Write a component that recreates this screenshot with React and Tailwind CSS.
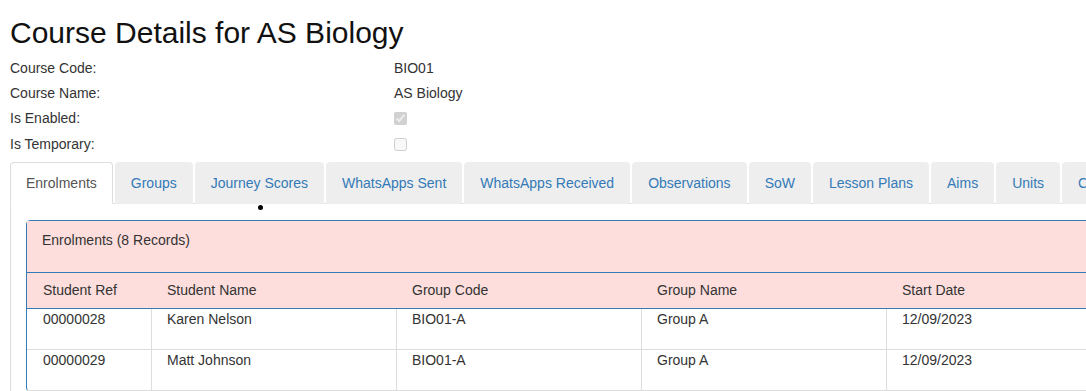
import React from "react";

const details = [
  { label: "Course Code:", value: "BIO01", h: "h-[25px]" },
  { label: "Course Name:", value: "AS Biology", h: "h-[25px]" },
  { label: "Is Enabled:", checkbox: true, checked: true, h: "h-[26px]" },
  { label: "Is Temporary:", checkbox: true, checked: false, h: "h-[25px]" },
];

const tabs = [
  "Enrolments",
  "Groups",
  "Journey Scores",
  "WhatsApps Sent",
  "WhatsApps Received",
  "Observations",
  "SoW",
  "Lesson Plans",
  "Aims",
  "Units",
  "Comments",
];

const columns = ["Student Ref", "Student Name", "Group Code", "Group Name", "Start Date"];

const enrolments = [
  ["00000028", "Karen Nelson", "BIO01-A", "Group A", "12/09/2023"],
  ["00000029", "Matt Johnson", "BIO01-A", "Group A", "12/09/2023"],
];

const colWidths = ["w-[124px]", "w-[245px]", "w-[245px]", "w-[245px]", "flex-1"];

function App() {
  return (
    <div className="h-screen w-full overflow-hidden bg-white font-['Liberation_Sans',Arial,sans-serif] text-[14px] leading-[20px] text-[#333]">
      <div className="w-[1200px] px-[10px]">
        <h1 className="mt-[16px] mb-[9px] h-[33px] text-[30px] leading-[33px] font-normal text-[#111]">
          Course Details for AS Biology
        </h1>

        {/* course details */}
        <div className="flex flex-col">
          {details.map((d) => (
            <div key={d.label} className={`flex ${d.h}`}>
              <div className="w-[384px] shrink-0">{d.label}</div>
              <div>
                {d.checkbox ? (
                  <input
                    type="checkbox"
                    disabled
                    readOnly
                    checked={d.checked}
                    className="m-0 mt-[4px] h-[13px] w-[13px]"
                  />
                ) : (
                  d.value
                )}
              </div>
            </div>
          ))}
        </div>

        {/* tabs */}
        <ul className="mt-[3px] flex border-b border-[#ddd]">
          {tabs.map((t, i) => (
            <li key={t} className="mr-[2px] mb-[-1px] shrink-0">
              <span
                className={
                  i === 0
                    ? "block rounded-t-[4px] border border-[#ddd] border-b-transparent bg-white px-[15px] py-[10px] text-[#555]"
                    : "block rounded-t-[4px] border border-transparent bg-[#eee] px-[15px] py-[10px] text-[#337ab7]"
                }
              >
                {t}
              </span>
            </li>
          ))}
        </ul>

        <div className="relative border-x border-[#ddd] px-[15px] pt-[16px]">
          <span className="absolute left-[247px] top-[1px] h-[5px] w-[5px] rounded-full bg-black"></span>

          <div className="rounded-[4px] border border-[#337ab7]">
            <div className="h-[52px] border-b border-[#337ab7] bg-[#fddedc] px-[15px] pt-[9px]">
              Enrolments (8 Records)
            </div>

            <div className="flex h-[36px] border-b border-[#337ab7] bg-[#fddedc] pt-[7px]">
              {columns.map((c, i) => (
                <div key={c} className={`${colWidths[i]} shrink-0 pl-[16px]`}>
                  {c}
                </div>
              ))}
            </div>

            {enrolments.map((row) => (
              <div key={row[0]} className="flex h-[41px] border-b border-[#ddd]">
                {row.map((cell, i) => (
                  <div
                    key={i}
                    className={`${colWidths[i]} shrink-0 ${
                      i === 0 ? "pl-[16px]" : "border-l border-[#ddd] pl-[15px]"
                    }`}
                  >
                    {cell}
                  </div>
                ))}
              </div>
            ))}
          </div>
        </div>
      </div>
    </div>
  );
}

export default App;
